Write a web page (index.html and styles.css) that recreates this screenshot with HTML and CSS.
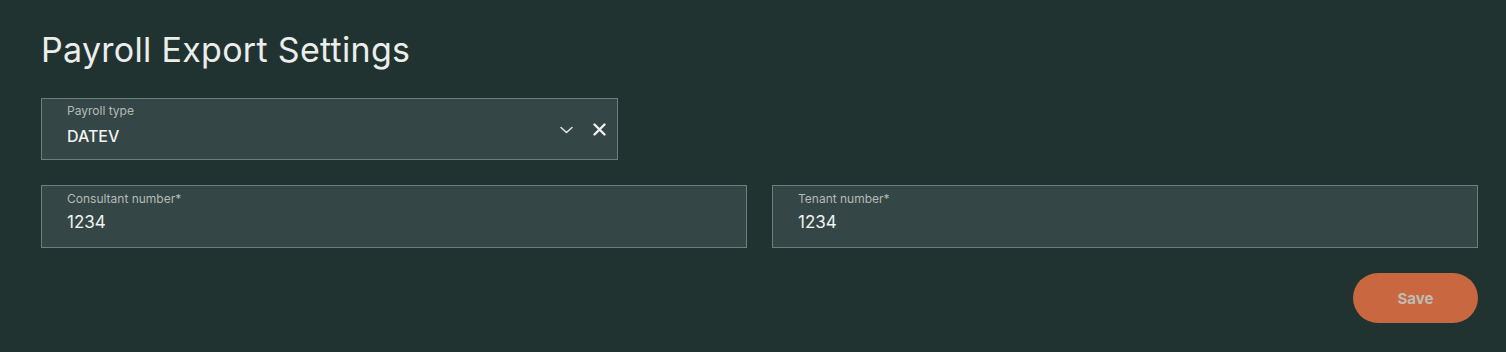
FILE: index.html
```html
<!DOCTYPE html>
<html lang="en">
<head>
    <meta charset="UTF-8">
    <meta name="viewport" content="width=device-width, initial-scale=1.0">
    <title>Payroll Export Settings</title>
    <link rel="stylesheet" href="styles.css">
</head>
<body>
<div class="page">
    <h1 class="page-title">Payroll Export Settings</h1>

    <div class="field select-field">
        <div class="field-text">
            <label class="field-label">Payroll type</label>
            <div class="field-value">DATEV</div>
        </div>
        <div class="field-icons">
            <svg class="icon-chevron" width="13" height="8" viewBox="0 0 13 8">
                <path d="M1 1.5 L6.5 6.5 L12 1.5" fill="none" stroke="#e3e7e5" stroke-width="1.5" stroke-linecap="round" stroke-linejoin="round"/>
            </svg>
            <svg class="icon-clear" width="13" height="13" viewBox="0 0 13 13">
                <path d="M1.5 1.5 L11.5 11.5 M11.5 1.5 L1.5 11.5" fill="none" stroke="#eef0ee" stroke-width="2.4" stroke-linecap="round"/>
            </svg>
        </div>
    </div>

    <div class="field-row">
        <div class="field">
            <div class="field-text">
                <label class="field-label">Consultant number*</label>
                <div class="field-value">1234</div>
            </div>
        </div>
        <div class="field">
            <div class="field-text">
                <label class="field-label">Tenant number*</label>
                <div class="field-value">1234</div>
            </div>
        </div>
    </div>

    <div class="actions">
        <button class="save-btn">Save</button>
    </div>
</div>
</body>
</html>
```

FILE: styles.css
```css
html, body {
    margin: 0;
    padding: 0;
    height: 100%;
    width: 100%;
}
body {
    background: #213331;
    font-family: Inter, "Noto Sans", sans-serif;
    color: #eef0ee;
}
.page {
    padding: 26px 28px 0 41px;
    box-sizing: border-box;
}
.page-title {
    margin: 0 0 24px 0;
    font-size: 34px;
    font-weight: 400;
    line-height: 48px;
    letter-spacing: 0.3px;
    color: #eceeec;
}
.field {
    display: flex;
    align-items: flex-start;
    height: 62px;
    background: #344645;
    border: 1px solid #6d7e7b;
    box-sizing: border-box;
    padding: 4px 12px 0 25px;
}
.select-field {
    width: 577px;
    padding-right: 11px;
}
.field-text {
    flex: 1;
    display: flex;
    flex-direction: column;
}
.field-label {
    font-size: 12px;
    line-height: 16px;
    color: #b3bbb8;
}
.field-value {
    font-size: 16px;
    line-height: 24px;
    font-weight: 500;
    color: #f1f3f1;
    margin-top: 5px;
}
.field-icons {
    display: flex;
    align-items: center;
    gap: 20px;
    height: 53px;
}
.field-row {
    display: grid;
    grid-template-columns: 1fr 1fr;
    gap: 25px;
    margin-top: 25px;
}
.field-row .field {
    height: 63px;
    padding-top: 5px;
}
.field-row .field-value {
    margin-top: 3px;
    font-size: 17px;
    font-weight: 400;
}
.actions {
    display: flex;
    justify-content: flex-end;
    margin-top: 25px;
}
.save-btn {
    width: 125px;
    height: 50px;
    border: none;
    border-radius: 25px;
    background: #c96740;
    color: #bdbdb4;
    font-family: Inter, "Noto Sans", sans-serif;
    font-size: 15px;
    font-weight: 700;
    cursor: pointer;
}
```
